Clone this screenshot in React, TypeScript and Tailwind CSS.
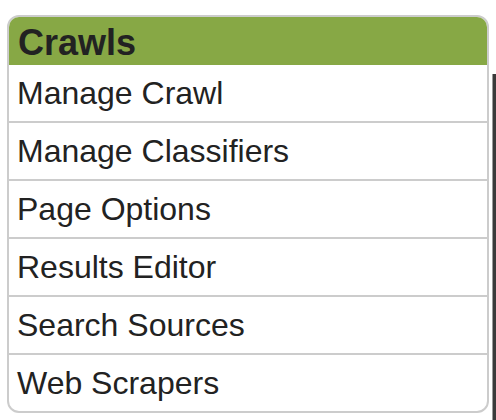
import React from "react";

const items = [
  "Manage Crawl",
  "Manage Classifiers",
  "Page Options",
  "Results Editor",
  "Search Sources",
  "Web Scrapers",
];

export default function App() {
  return (
    <div
      className="relative w-[496px] h-[420px] bg-white overflow-hidden"
      style={{ fontFamily: '"Liberation Sans", Arial, sans-serif' }}
    >
      <div className="absolute left-[492px] top-[74px] w-[10px] h-[400px] border-l border-[#9a9a9a] bg-[#3a3a3a]" />
      <div className="relative ml-[7px] mt-[15px] w-[482px] border-2 border-[#cccccc] rounded-[12px] overflow-hidden bg-white">
        <div className="bg-[#87a845] h-[48px] pl-[9px] pt-[5px] pb-[2px] text-[36px] leading-[41px] font-bold text-[#222222]">
          Crawls
        </div>
        {items.map((t, i) => (
          <div
            key={t}
            className={
              "h-[56px] flex items-center pl-[8px] text-[32px] text-[#222222] " +
              (i < items.length - 1 ? "box-content border-b-2 border-[#cccccc]" : "")
            }
          >
            {t}
          </div>
        ))}
      </div>
    </div>
  );
}
